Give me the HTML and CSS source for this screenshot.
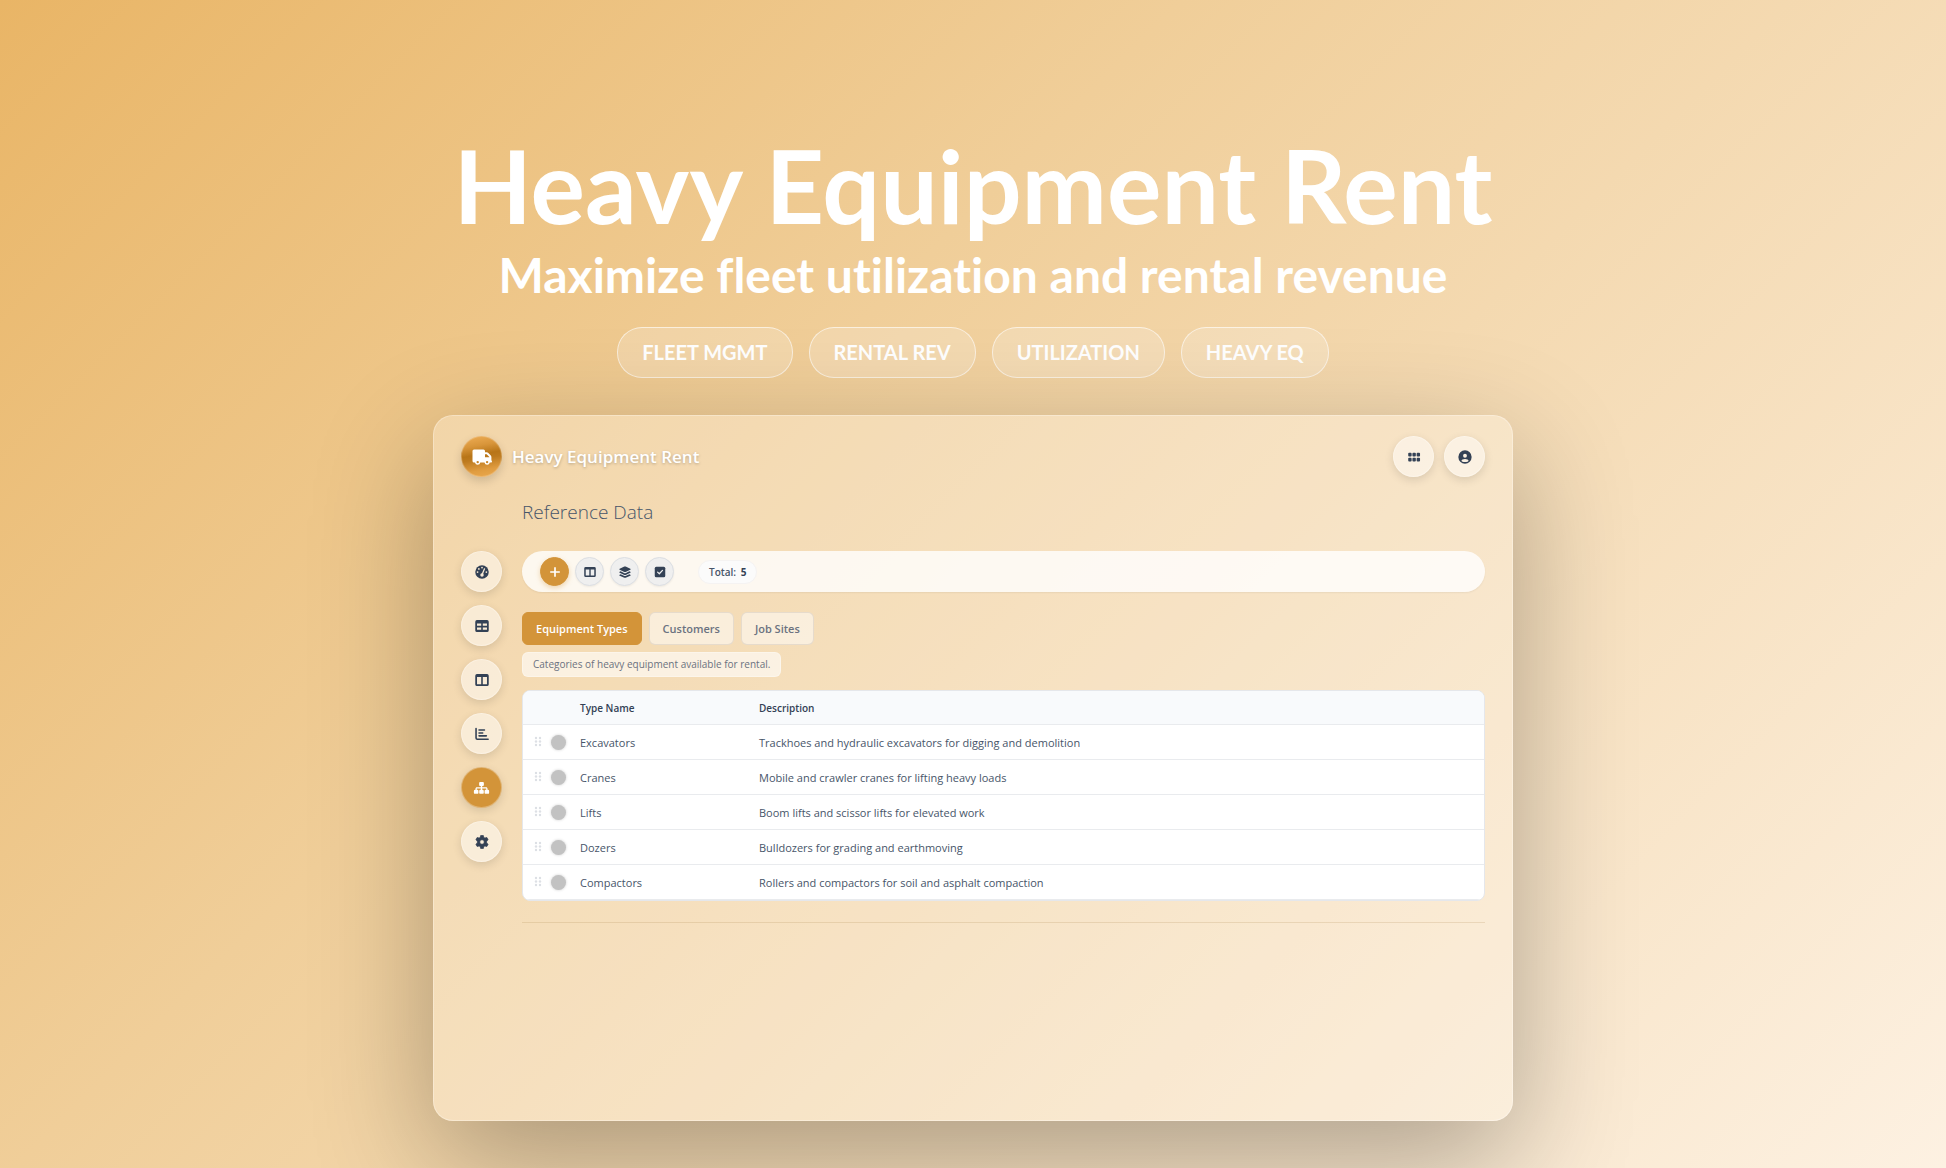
FILE: index.html
```html
<!DOCTYPE html>
<html lang="en">
<head>
  <meta charset="UTF-8">
  <meta name="viewport" content="width=device-width, initial-scale=1.0">
  <title>Heavy Equipment Rent</title>
  <link rel="stylesheet" href="styles.css">
</head>
<body>

  <!-- Shared icons -->
  <svg class="icon-defs" aria-hidden="true">
    <symbol id="icon-columns" viewBox="0 0 16 16">
      <path fill-rule="evenodd" d="M2.2 1.2h11.6A1.9 1.9 0 0 1 15.7 3v10a1.9 1.9 0 0 1-1.9 1.8H2.2A1.9 1.9 0 0 1 .3 13V3a1.9 1.9 0 0 1 1.9-1.8zM2.3 4.6v8.2h4.8V4.600zm6.600 0v8.200h4.800V4.600z"/>
    </symbol>
    <symbol id="icon-grip" viewBox="0 0 8 12">
      <circle cx="2" cy="2" r="1.200"/><circle cx="6" cy="2" r="1.200"/>
      <circle cx="2" cy="5.500" r="1.200"/><circle cx="6" cy="5.500" r="1.200"/>
      <circle cx="2" cy="9" r="1.200"/><circle cx="6" cy="9" r="1.200"/>
    </symbol>
  </svg>

  <!-- Hero -->
  <header class="hero">
    <h1>Heavy Equipment Rent</h1>
    <p class="tagline">Maximize fleet utilization and rental revenue</p>
    <ul class="tags">
      <li>FLEET MGMT</li>
      <li>RENTAL REV</li>
      <li>UTILIZATION</li>
      <li>HEAVY EQ</li>
    </ul>
  </header>

  <!-- App Window -->
  <main class="app-window">
    <div class="app-header">
      <a href="#" class="brand">
        <span class="brand-logo">
          <svg viewBox="0 0 20 16"><path fill-rule="evenodd" d="M2 .5h9.5A1.5 1.5 0 0 1 13 2v1.3h1.8c.5 0 1 .2 1.3.5l2.7 2.8c.4.4.6.8.6 1.4v3.6c.4.1.6.5.6.9 0 .6-.4 1-1 1h-1.2a2.7 2.7 0 0 1-5.3 0H8.3a2.7 2.7 0 0 1-5.3 0H2A1.5 1.5 0 0 1 .5 12V2A1.5 1.5 0 0 1 2 .5zM13 5.2v3h4.4V8l-2.7-2.8zM5.7 11.9a1.2 1.2 0 1 0 0 2.4 1.2 1.2 0 0 0 0-2.4zm9.4 0a1.2 1.2 0 1 0 0 2.4 1.2 1.2 0 0 0 0-2.4z"/></svg>
        </span>
        <span class="brand-name">Heavy Equipment Rent</span>
      </a>
      <div class="header-actions">
        <button class="round-btn" aria-label="Apps">
          <svg viewBox="0 0 16 16"><rect x="1.4" y="3.2" width="3.9" height="4.1" rx="1.1"/><rect x="6.2" y="3.2" width="3.9" height="4.1" rx="1.1"/><rect x="11" y="3.2" width="3.9" height="4.1" rx="1.1"/><rect x="1.4" y="8.9" width="3.9" height="4.1" rx="1.1"/><rect x="6.2" y="8.9" width="3.9" height="4.1" rx="1.1"/><rect x="11" y="8.9" width="3.9" height="4.1" rx="1.1"/></svg>
        </button>
        <button class="round-btn" aria-label="Account">
          <svg viewBox="0 0 16 16"><path fill-rule="evenodd" d="M8 .4a7.6 7.6 0 1 1 0 15.2A7.6 7.6 0 0 1 8 .4zm0 4a2.2 2.2 0 1 0 0 4.400a2.200 2.200 0 0 0 0-4.400zm0 5.800c-2.200 0-4 .8-4 2.100 0 .9 1.800 1.500 4 1.500s4-.6 4-1.500c0-1.300-1.800-2.100-4-2.100z"/></svg>
        </button>
      </div>
    </div>

    <div class="app-body">
      <h2>Reference Data</h2>

      <!-- Sidebar -->
      <nav class="side-nav">
        <a href="#" class="round-btn" aria-label="Dashboard">
          <svg viewBox="0 0 16 16"><circle cx="8" cy="8" r="7.7"/><g fill="#f9ead5"><circle cx="8" cy="2.900" r="1"/><circle cx="4.400" cy="4.500" r="1"/><circle cx="2.900" cy="8" r="1"/><circle cx="13" cy="8" r="1"/><circle cx="8" cy="11.400" r="2"/><path d="M7.300 10.800l2.900-6.700a.7.7 0 0 1 1.300.6L8.800 11.400z"/></g></svg>
        </a>
        <a href="#" class="round-btn" aria-label="Table">
          <svg viewBox="0 0 16 16"><path fill-rule="evenodd" d="M2.200 1.200h11.600A1.900 1.900 0 0 1 15.700 3v10a1.900 1.900 0 0 1-1.900 1.800H2.200A1.900 1.900 0 0 1 .3 13V3a1.900 1.900 0 0 1 1.900-1.800zM2.300 5.100v2.700h4.800V5.100zm6.600 0v2.700h4.800V5.100zM2.300 9.600v2.800h4.800V9.600zm6.600 0v2.800h4.800V9.600z"/></svg>
        </a>
        <a href="#" class="round-btn" aria-label="Board">
          <svg><use href="#icon-columns"/></svg>
        </a>
        <a href="#" class="round-btn" aria-label="Reports">
          <svg class="line-icon" viewBox="0 0 16 16"><path d="M1.200 1.800v10.700c0 .9.500 1.400 1.400 1.400h12.400M4.600 3.500h6.200M4.600 6.800h4.200M4.600 10.100h8.400"/></svg>
        </a>
        <a href="#" class="round-btn active" aria-label="Reference data">
          <svg class="wide-icon" viewBox="0 0 18 16"><rect x="6.300" y="1.200" width="5.400" height="4.600" rx="1.200"/><path d="M8.200 5h1.600v2.200h4.400c1 0 1.700.7 1.700 1.700v2h-1.500V8.700H9.800v2.200H8.200V8.700H3.600v2.200H2.100v-2c0-1 .7-1.700 1.700-1.700h4.400z"/><rect x=".3" y="9.900" width="5.200" height="4.800" rx="1.400"/><rect x="6.400" y="9.900" width="5.200" height="4.800" rx="1.400"/><rect x="12.500" y="9.900" width="5.200" height="4.800" rx="1.400"/></svg>
        </a>
        <a href="#" class="round-btn" aria-label="Settings">
          <svg viewBox="0 0 16 16"><path fill-rule="evenodd" d="M6.500.5h3l.5 2.200 1.300.8 2.200-.7 1.500 2.600-1.700 1.600v2l1.700 1.600-1.500 2.600-2.200-.7-1.300.8-.5 2.200h-3L6 13.300l-1.300-.8-2.200.7L1 10.600 2.700 9V7L1 5.400l1.500-2.600 2.200.7L6 2.700zM8 5.400a2.600 2.600 0 1 0 0 5.200 2.600 2.600 0 0 0 0-5.200z" stroke="#334155" stroke-width=".8" stroke-linejoin="round"/></svg>
        </a>
      </nav>

      <!-- Main Content -->
      <section class="content">
        <div class="toolbar">
          <button class="tool-btn primary" aria-label="Add">
            <svg viewBox="0 0 16 16"><path d="M6.900 1.600h2.200v5.300h5.300v2.200H9.100v5.300H6.900V9.100H1.600V6.900h5.300z"/></svg>
          </button>
          <button class="tool-btn" aria-label="Columns">
            <svg><use href="#icon-columns"/></svg>
          </button>
          <button class="tool-btn" aria-label="Layers">
            <svg viewBox="0 0 16 16"><path d="M8 .6c.3 0 .6.100.9.200l6.200 2.900c.6.300.6 1 0 1.300L8.900 7.900c-.6.300-1.200.3-1.800 0L.9 5c-.6-.3-.6-1 0-1.300L7.100.8c.3-.1.600-.2.900-.2z"/><path d="M2.200 7.100l4.400 2.100c.9.400 1.900.4 2.800 0l4.400-2.100 1.300.6c.6.300.6 1 0 1.300l-6.200 2.900c-.6.300-1.200.3-1.800 0L.9 9c-.6-.3-.6-1 0-1.300z"/><path d="M2.200 11l4.400 2.100c.9.400 1.900.4 2.800 0l4.400-2.100 1.300.6c.6.300.6 1 0 1.300l-6.200 2.600c-.6.300-1.200.3-1.800 0L.9 12.900c-.6-.3-.6-1 0-1.300z"/></svg>
          </button>
          <button class="tool-btn" aria-label="Select">
            <svg viewBox="0 0 16 16"><rect x="1" y="1" width="14" height="14" rx="2"/><path d="M4.800 8.200l2.300 2.200 4.200-4.500" fill="none" stroke="#efefef" stroke-width="1.700" stroke-linecap="round" stroke-linejoin="round"/></svg>
          </button>
          <span class="total">Total: <strong>5</strong></span>
        </div>

        <div class="tabs">
          <button class="tab active">Equipment Types</button>
          <button class="tab">Customers</button>
          <button class="tab">Job Sites</button>
        </div>
        <p class="caption">Categories of heavy equipment available for rental.</p>

        <div class="table-box">
          <table>
            <thead>
              <tr><th class="col-handle"></th><th class="col-name">Type Name</th><th>Description</th></tr>
            </thead>
            <tbody>
              <tr>
                <td><div class="handle"><svg><use href="#icon-grip"/></svg><span class="dot"></span></div></td>
                <td>Excavators</td>
                <td>Trackhoes and hydraulic excavators for digging and demolition</td>
              </tr>
              <tr>
                <td><div class="handle"><svg><use href="#icon-grip"/></svg><span class="dot"></span></div></td>
                <td>Cranes</td>
                <td>Mobile and crawler cranes for lifting heavy loads</td>
              </tr>
              <tr>
                <td><div class="handle"><svg><use href="#icon-grip"/></svg><span class="dot"></span></div></td>
                <td>Lifts</td>
                <td>Boom lifts and scissor lifts for elevated work</td>
              </tr>
              <tr>
                <td><div class="handle"><svg><use href="#icon-grip"/></svg><span class="dot"></span></div></td>
                <td>Dozers</td>
                <td>Bulldozers for grading and earthmoving</td>
              </tr>
              <tr>
                <td><div class="handle"><svg><use href="#icon-grip"/></svg><span class="dot"></span></div></td>
                <td>Compactors</td>
                <td>Rollers and compactors for soil and asphalt compaction</td>
              </tr>
            </tbody>
          </table>
        </div>
        <hr>
      </section>
    </div>
  </main>

</body>
</html>
```
FILE: styles.css
```css
/* Global Styles */
* {
  box-sizing: border-box;
}

body {
  font-family: 'Segoe UI', 'Open Sans', sans-serif;
  font-size: 11px;
  color: #475569;
  background: linear-gradient(135deg, #e9b566 0%, #f0ce99 38%, #fdf1e2 100%);
  margin: 0;
  padding: 134px 20px 47px;
  min-height: 100vh;
  display: flex;
  flex-direction: column;
  align-items: center;
}

h1, h2, p, ul {
  margin: 0;
  padding: 0;
}

button {
  font-family: inherit;
  padding: 0;
  cursor: pointer;
}

svg {
  display: block;
  fill: currentColor;
}

.icon-defs {
  display: none;
}

/* Hero */
.hero {
  font-family: 'Century Gothic', Lato, sans-serif;
  font-weight: 700;
  font-variant-ligatures: none;
  color: #fff;
  text-align: center;
  margin-bottom: 37px;
}

.hero h1 {
  font-size: 102px;
  line-height: 102px;
}

.tagline {
  font-size: 48px;
  line-height: 58px;
  margin-top: 10px;
}

.tags {
  display: flex;
  justify-content: center;
  flex-wrap: wrap;
  gap: 16px;
  margin-top: 23px;
  list-style: none;
}

.tags li {
  font-size: 20px;
  line-height: 49px;
  padding: 0 24px;
  background: rgba(255, 255, 255, 0.2);
  border: 1px solid rgba(255, 255, 255, 0.6);
  border-radius: 25px;
}

/* App Window */
.app-window {
  flex: 1;
  width: 100%;
  max-width: 1080px;
  padding: 20px 27px;
  background: rgba(255, 255, 255, 0.25);
  border: 1px solid rgba(255, 255, 255, 0.3);
  border-radius: 20px;
  box-shadow: 0 40px 120px rgba(0, 0, 0, 0.3);
}

.app-header {
  display: flex;
  justify-content: space-between;
  align-items: center;
  margin-bottom: 22px;
}

.brand {
  display: flex;
  align-items: center;
  gap: 10px;
  color: #fff;
  text-decoration: none;
}

.brand-logo {
  width: 41px;
  height: 41px;
  display: flex;
  align-items: center;
  justify-content: center;
  border: 1px solid rgba(255, 255, 255, 0.2);
  border-radius: 50%;
  background: linear-gradient(170deg, #eead55 0%, #d8953a 25%, #b87518 45%, #bd7a1e 55%, #e09c40 80%, #eba94e 100%);
  box-shadow: 0 4px 10px rgba(0, 0, 0, 0.15);
}

.brand-logo svg {
  width: 20px;
  height: 16px;
}

.brand-name {
  font-size: 17px;
  font-weight: 600;
  text-shadow: 0 1px 3px rgba(0, 0, 0, 0.25);
}

.header-actions {
  display: flex;
  gap: 10px;
}

.round-btn {
  width: 41px;
  height: 41px;
  display: flex;
  align-items: center;
  justify-content: center;
  color: #334155;
  background: rgba(255, 255, 255, 0.48);
  border: 1px solid rgba(255, 255, 255, 0.3);
  border-radius: 50%;
  box-shadow: 0 3px 10px rgba(0, 0, 0, 0.12);
}

.round-btn svg {
  width: 14px;
  height: 14px;
}

.round-btn .wide-icon {
  width: 17px;
}

.round-btn.active {
  background: #d39439;
  color: #fff;
}

.line-icon path {
  fill: none;
  stroke: currentColor;
  stroke-width: 1.8;
  stroke-linecap: round;
}

/* Body grid: nav on the left, title and content on the right */
.app-body {
  display: grid;
  grid-template-columns: 41px 1fr;
  column-gap: 20px;
  row-gap: 26px;
}

h2 {
  grid-column: 2;
  font-size: 19px;
  line-height: 26px;
  font-weight: 300;
  color: #475569;
}

.side-nav {
  display: flex;
  flex-direction: column;
  gap: 13px;
}

.content {
  min-width: 0;
}

/* Toolbar */
.toolbar {
  display: flex;
  align-items: center;
  gap: 6px;
  height: 41px;
  padding: 0 18px;
  background: rgba(255, 255, 255, 0.8);
  border-radius: 21px;
  box-shadow: 0 1px 2px rgba(0, 0, 0, 0.06);
}

.tool-btn {
  width: 29px;
  height: 29px;
  display: flex;
  align-items: center;
  justify-content: center;
  color: #334155;
  background: #efefef;
  border: 1px solid #dcdfe3;
  border-radius: 50%;
  box-shadow: 0 1px 2px rgba(0, 0, 0, 0.06);
}

.tool-btn svg {
  width: 12px;
  height: 12px;
}

.tool-btn.primary {
  color: #fff;
  background: #d39439;
  border-color: #d39439;
  box-shadow: 0 2px 5px rgba(211, 148, 57, 0.35);
}

.total {
  margin-left: 18px;
  padding: 0 10px;
  font-size: 10px;
  font-weight: 600;
  line-height: 22px;
  background: #fbfbfb;
  border: 1px solid #f5f3f2;
  border-radius: 12px;
}

.total strong {
  margin-left: 2px;
  font-weight: 700;
  color: #334155;
}

/* Tabs */
.tabs {
  display: flex;
  gap: 7px;
  margin-top: 20px;
}

.tab {
  height: 33px;
  padding: 0 13px;
  font-size: 11px;
  font-weight: 600;
  color: #6b7280;
  background: rgba(255, 255, 255, 0.5);
  border: 1px solid rgba(200, 190, 180, 0.4);
  border-radius: 6px;
}

.tab.active {
  color: #fff;
  background: #d39439;
  border-color: #d39439;
}

.caption {
  width: fit-content;
  margin-top: 7px;
  padding: 0 10px;
  font-size: 10px;
  line-height: 23px;
  color: #6b7280;
  background: rgba(255, 255, 255, 0.6);
  border: 1px solid rgba(255, 255, 255, 0.3);
  border-radius: 6px;
}

/* Table */
.table-box {
  margin-top: 13px;
  overflow: hidden;
  background: #fff;
  border: 1px solid #e5e7eb;
  border-radius: 8px;
}

table {
  width: 100%;
  table-layout: fixed;
  border-collapse: separate;
  border-spacing: 0;
}

th, td {
  padding: 0;
  text-align: left;
}

th {
  height: 34px;
  font-size: 10px;
  font-weight: 600;
  color: #334155;
  background: #f8fafc;
  border-bottom: 1px solid #e9ebee;
}

td {
  height: 35px;
  border-bottom: 1px solid #e9ebee;
}

.col-handle {
  width: 57px;
}

.col-name {
  width: 179px;
}

.handle {
  display: flex;
  align-items: center;
  gap: 9px;
  padding-left: 11px;
}

.handle svg {
  width: 8px;
  height: 12px;
  color: #dde0e5;
}

.dot {
  width: 15px;
  height: 15px;
  border-radius: 50%;
  background: #c2c2c2;
  box-shadow: 0 0 3px rgba(0, 0, 0, 0.2);
}

hr {
  margin: 21px 0 0;
  border: none;
  border-top: 1px solid rgba(160, 120, 60, 0.18);
}

@media (max-width: 1100px) {
  .hero h1 {
    font-size: 60px;
    line-height: 64px;
  }

  .tagline {
    font-size: 28px;
    line-height: 36px;
  }
}
```
